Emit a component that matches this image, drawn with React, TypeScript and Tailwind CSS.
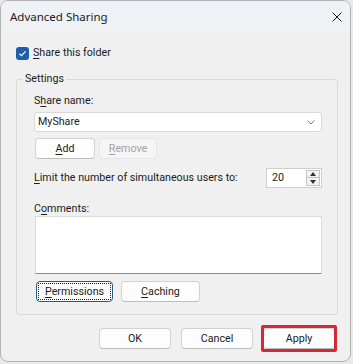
import React from "react";

const font = "font-['Roboto','Noto_Sans',sans-serif]";

const Btn = ({
  children,
  className = "",
  disabled = false,
}: {
  children: React.ReactNode;
  className?: string;
  disabled?: boolean;
}) => (
  <button
    type="button"
    disabled={disabled}
    className={`h-[21px] rounded-[4px] border text-[10.7px] leading-[16px] flex items-center justify-center
      ${disabled ? "bg-[#f5f5f5] border-[#e8e8e8] text-[#a3a3a3]" : "bg-[#fdfdfd] border-[#d2d2d2] border-b-[#bdbdbd] text-[#1b1b1b]"}
      ${className}`}
  >
    {children}
  </button>
);

const U = ({ children }: { children: React.ReactNode }) => <span className="underline underline-offset-2">{children}</span>;

export default function App() {
  return (
    <div className={`w-[353px] h-[364px] bg-[#e9e9e9] ${font} text-[#1b1b1b] whitespace-nowrap`}>
      <div className="w-[351px] h-[362px] border border-[#b3b3b3] rounded-[8px] overflow-hidden bg-[#f0f0f0] flex flex-col">
        {/* title bar */}
        <div className="h-[32px] shrink-0 flex items-center justify-between pl-[9px] pr-[8px] bg-gradient-to-b from-[#eef2f8] to-[#f0f1f3]">
          <span className="font-['Noto_Sans',sans-serif] text-[11.5px] leading-[16px]">Advanced Sharing</span>
          <svg width="10" height="10" viewBox="0 0 10 10" className="mt-[-1px]">
            <path d="M0.5 0.5 L9.5 9.5 M9.5 0.5 L0.5 9.5" stroke="#1b1b1b" strokeWidth="1" />
          </svg>
        </div>

        <div className="flex flex-col pl-[15px] pr-[13px] text-[10.7px]">
          <label className="mt-[12px] flex items-center gap-[4px] h-[16px] leading-[16px]">
            <span className="w-[13px] h-[13px] rounded-[3px] bg-[#1c5fae] flex items-center justify-center">
              <svg width="9" height="9" viewBox="0 0 9 9">
                <path d="M1.5 4.8 L3.5 6.7 L7.6 2.3" stroke="#fff" strokeWidth="1.2" fill="none" />
              </svg>
            </span>
            <span><U>S</U>hare this folder</span>
          </label>

          <fieldset className="mt-[10px] w-[322px] border border-[#dadada] rounded-[3px] p-0">
            <legend className="ml-[6px] px-[2px] leading-[16px]">Settings</legend>
            <div className="flex flex-col pl-[17px] pr-[15px] pt-[6px] pb-[12px] leading-[16px]">
              <span>S<U>h</U>are name:</span>
              <div className="mt-[3px] h-[20px] bg-white border border-[#d9d9d9] rounded-[3px] flex items-center justify-between pl-[3px] pr-[6px]">
                <span>MyShare</span>
                <svg width="8" height="5" viewBox="0 0 8 5">
                  <path d="M0.5 0.5 L4 4 L7.5 0.5" stroke="#6a6a6a" strokeWidth="0.9" fill="none" />
                </svg>
              </div>
              <div className="mt-[6px] flex gap-[4px] pl-[1px]">
                <Btn className="w-[60px]"><U>A</U>dd</Btn>
                <Btn className="w-[58px]" disabled><U>R</U>emove</Btn>
              </div>
              <div className="mt-[9px] flex items-center justify-between">
                <span><U>L</U>imit the number of simultaneous users to:</span>
                <div className="w-[56px] h-[20px] bg-white border border-[#cfcfcf] flex items-center justify-between pl-[5px] pr-[1px]">
                  <span>20</span>
                  <div className="flex flex-col w-[14px] h-[16px]">
                    <div className="h-[8px] border border-[#c4c4c4] bg-[#f3f3f3] flex items-center justify-center">
                      <svg width="6" height="4" viewBox="0 0 6 4"><path d="M0 4 L3 0 L6 4 Z" fill="#333" /></svg>
                    </div>
                    <div className="h-[8px] border border-t-0 border-[#c4c4c4] bg-[#f3f3f3] flex items-center justify-center">
                      <svg width="6" height="4" viewBox="0 0 6 4"><path d="M0 0 L6 0 L3 4 Z" fill="#333" /></svg>
                    </div>
                  </div>
                </div>
              </div>
              <span className="mt-[13px] leading-[15px]">C<U>o</U>mments:</span>
              <div className="h-[58px] bg-white border border-[#dcdcdc] border-b-[#8c8c8c] ml-[1px]" />
              <div className="mt-[7px] flex gap-[8px] pl-[2px]">
                <button
                  type="button"
                  className="w-[77px] h-[21px] rounded-[4px] border border-[#2b5d80] bg-[#fdfdfd] p-[2px] text-[10.7px] leading-[15px]"
                >
                  <span className="flex h-full items-center justify-center outline outline-1 outline-dotted outline-[#222]">
                    <U>P</U>ermissions
                  </span>
                </button>
                <Btn className="w-[79px]"><U>C</U>aching</Btn>
              </div>
            </div>
          </fieldset>

          <div className="mt-[13px] flex justify-end gap-[10px] pr-[2px]">
            <Btn className="w-[72px]">OK</Btn>
            <Btn className="w-[72px]">Cancel</Btn>
            <div className="relative">
              <Btn className="w-[72px]">Apply</Btn>
              <span className="absolute -inset-x-[2px] -inset-y-[3px] border-[3px] border-[#d12a36] rounded-[2px]" />
            </div>
          </div>
        </div>
      </div>
    </div>
  );
}
